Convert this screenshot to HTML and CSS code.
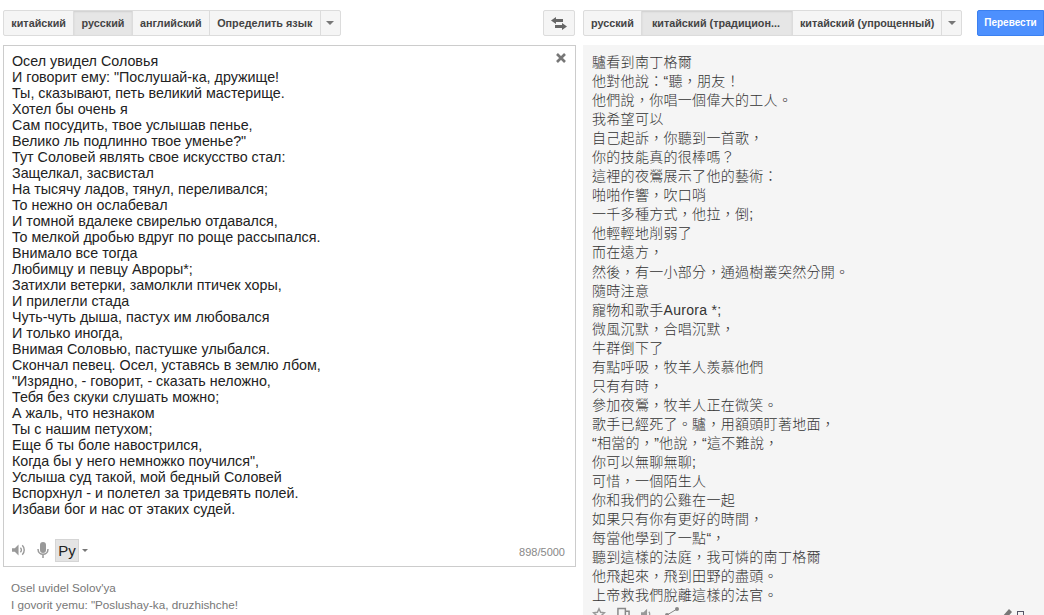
FILE: index.html
```html
<!DOCTYPE html>
<html>
<head>
<meta charset="utf-8">
<title>Переводчик</title>
<link rel="stylesheet" href="styles.css">
</head>
<body>
<div class="page">
  <!-- исходный текст -->
  <div class="col-src">
    <div class="toolbar">
      <div class="btn-group">
        <span class="lang">китайский</span>
        <span class="lang active">русский</span>
        <span class="lang">английский</span>
        <span class="lang">Определить язык</span>
        <span class="lang more"><i class="caret"></i></span>
      </div>
      <span class="swap">
        <svg width="16" height="13" viewBox="0 0 16 13"><path fill="#666" d="M0 3.500 5 0v2h7v3H5v2zM16 9.500 11 6v2H4v3h7v2z"/></svg>
      </span>
    </div>
    <div class="src-box">
      <span class="clear">
        <svg width="10" height="10" viewBox="0 0 10 10"><path stroke="#777" stroke-width="2.6" d="M1 1l8 8M9 1l-8 8"/></svg>
      </span>
      <div class="src-text">Осел увидел Соловья
И говорит ему: "Послушай-ка, дружище!
Ты, сказывают, петь великий мастерище.
Хотел бы очень я
Сам посудить, твое услышав пенье,
Велико ль подлинно твое уменье?"
Тут Соловей являть свое искусство стал:
Защелкал, засвистал
На тысячу ладов, тянул, переливался;
То нежно он ослабевал
И томной вдалеке свирелью отдавался,
То мелкой дробью вдруг по роще рассыпался.
Внимало все тогда
Любимцу и певцу Авроры*;
Затихли ветерки, замолкли птичек хоры,
И прилегли стада
Чуть-чуть дыша, пастух им любовался
И только иногда,
Внимая Соловью, пастушке улыбался.
Скончал певец. Осел, уставясь в землю лбом,
"Изрядно, - говорит, - сказать неложно,
Тебя без скуки слушать можно;
А жаль, что незнаком
Ты с нашим петухом;
Еще б ты боле навострился,
Когда бы у него немножко поучился",
Услыша суд такой, мой бедный Соловей
Вспорхнул - и полетел за тридевять полей.
Избави бог и нас от этаких судей.</div>
      <div class="src-foot">
        <svg class="ico-sound" width="14" height="14" viewBox="0 0 15 14"><path fill="#999" d="M0 5h3l4-4v12l-4-4H0z"/><path fill="none" stroke="#999" stroke-width="1.5" d="M9 4.500a3.500 3.500 0 0 1 0 5M11 2a7 7 0 0 1 0 10"/></svg>
        <svg class="ico-mic" width="12" height="17" viewBox="0 0 12 17"><rect x="3" y="0" width="6" height="11" rx="3" fill="#999"/><path fill="none" stroke="#999" stroke-width="1.5" d="M1 7c0 7 10 7 10 0M6 12v4"/></svg>
        <span class="kbd">Ру</span>
        <i class="caret small"></i>
        <span class="count">898/5000</span>
      </div>
    </div>
    <div class="translit">Osel uvidel Solov'ya<br>I govorit yemu: "Poslushay-ka, druzhishche!</div>
  </div>

  <!-- перевод -->
  <div class="col-dst">
    <div class="toolbar">
      <div class="btn-group">
        <span class="lang">русский</span>
        <span class="lang active trunc">китайский (традицион...</span>
        <span class="lang">китайский (упрощенный)</span>
        <span class="lang more"><i class="caret"></i></span>
      </div>
      <span class="go">Перевести</span>
    </div>
    <div class="dst-box">
      <div class="dst-text">驢看到南丁格爾
他對他說：“聽，朋友！
他們說，你唱一個偉大的工人。
我希望可以
自己起訴，你聽到一首歌，
你的技能真的很棒嗎？
這裡的夜鶯展示了他的藝術：
啪啪作響，吹口哨
一千多種方式，他拉，倒;
他輕輕地削弱了
而在遠方，
然後，有一小部分，通過樹叢突然分開。
隨時注意
寵物和歌手Aurora *;
微風沉默，合唱沉默，
牛群倒下了
有點呼吸，牧羊人羨慕他們
只有有時，
參加夜鶯，牧羊人正在微笑。
歌手已經死了。驢，用額頭盯著地面，
“相當的，”他說，“這不難說，
你可以無聊無聊;
可惜，一個陌生人
你和我們的公雞在一起
如果只有你有更好的時間，
每當他學到了一點“，
聽到這樣的法庭，我可憐的南丁格爾
他飛起來，飛到田野的盡頭。
上帝救我們脫離這樣的法官。</div>
      <div class="dst-foot">
        <svg width="14" height="14" viewBox="0 0 24 24"><path fill="none" stroke="#999" stroke-width="2.500" d="M12 3l2.800 6 6.500.8-4.800 4.400 1.300 6.500L12 17.400 6.200 20.700l1.300-6.500L2.700 9.800 9.200 9z"/></svg>
        <svg width="13" height="14" viewBox="0 0 14 14"><path fill="none" stroke="#888" stroke-width="1.600" d="M1 1h8v9H1zM5 10v3h8V4H9"/></svg>
        <svg width="13" height="14" viewBox="0 0 15 14"><path fill="#999" d="M0 5h3l4-4v12l-4-4H0z"/><path fill="none" stroke="#999" stroke-width="1.500" d="M9 4.500a3.500 3.500 0 0 1 0 5"/></svg>
        <svg width="14" height="14" viewBox="0 0 14 14"><circle cx="2" cy="8" r="2" fill="#888"/><circle cx="12" cy="2" r="2" fill="#888"/><circle cx="12" cy="13" r="2" fill="#888"/><path stroke="#888" d="M2 8l10-6M2 8l10 5"/></svg>
        <svg class="pen" width="12" height="14" viewBox="0 0 12 14"><path fill="#777" d="M0 13l1-4 7-8 3 3-7 8z"/></svg>
        <i class="flag"></i>
      </div>
    </div>
  </div>
</div>
</body>
</html>
```

FILE: styles.css
```css
html, body { margin: 0; height: 100%; overflow: hidden; background: #fff; }
body { font-family: "Liberation Sans", Arial, sans-serif; color: #222; }

.page { display: flex; gap: 7px; height: 615px; padding-left: 3px; }
.col-src { width: 573px; flex: none; }
.col-dst { flex: 1; min-width: 0; }

/* верхние кнопки */
.toolbar { display: flex; justify-content: space-between; height: 26px; padding-top: 10px; margin-bottom: 9px; }
.btn-group { display: flex; border: 1px solid #dcdcdc; border-radius: 2px; box-sizing: border-box; height: 26px; background: #f5f5f5; }
.lang {
  display: block; padding: 0 7px; line-height: 24px; font-size: 10.8px; font-weight: bold; color: #444;
  border-left: 1px solid #dcdcdc; white-space: nowrap;
}
.col-src .lang { padding: 0 7.3px; }
.lang:first-child { border-left: none; }
.lang.active { background: #e6e6e6; box-shadow: inset 0 1px 2px rgba(0,0,0,.1); }
.lang.trunc { box-sizing: content-box; width: 130px; padding: 0 10px; }
.lang.more, .col-src .lang.more { width: 4px; padding: 0 7.500px; }
.caret { display: block; width: 0; height: 0; border: 4px solid transparent; border-top-color: #777; border-bottom: none; margin: 10px 0 0 -2px; }
.caret.small { border-width: 3px; border-bottom: none; margin: 1px 0 0 3px; }
.swap {
  display: flex; align-items: center; justify-content: center; box-sizing: border-box; width: 32px; height: 26px; margin-right: 1px;
  background: #f5f5f5; border: 1px solid #dcdcdc; border-radius: 2px;
}
.go {
  box-sizing: border-box; width: 67px; height: 26px; line-height: 24px; text-align: center; color: #fff; font-size: 10px; font-weight: bold;
  background: #4d90fe; border: 1px solid #3b80f0; border-radius: 2px 0 0 2px;
}

/* левое поле */
.src-box { position: relative; box-sizing: border-box; height: 522px; border: 1px solid #ccc; display: flex; flex-direction: column; }
.src-text { flex: 1; padding: 7px 8px 0; font-size: 14.3px; line-height: 16px; white-space: pre; color: #222; }
.clear { position: absolute; top: 7px; right: 9px; line-height: 0; }
.src-foot { display: flex; align-items: center; height: 31px; padding: 0 10px 1px 8px; box-sizing: border-box; }
.ico-mic { margin-left: 11px; }
.kbd { width: 24px; height: 23px; margin-left: 6px; line-height: 21px; text-align: center; font-size: 15px; background: #e4e4e4; border: 1px solid #d5d5d5; box-sizing: border-box; color: #222; }
.count { margin-left: auto; padding-top: 3px; font-size: 11px; color: #888; }
.translit { padding: 12px 0 0 8px; font-size: 11.7px; line-height: 17px; color: #777; }

/* правое поле */
.dst-box { background: #f5f5f5; height: 570px; }
.dst-text { padding: 8px 0 0 9px; font-family: "Liberation Sans", "Noto Sans CJK TC", sans-serif; font-size: 14px; letter-spacing: .3px; line-height: 19.04px; white-space: pre; font-weight: 300; color: #333; }
.dst-foot { display: flex; align-items: flex-start; gap: 11px; padding: 2px 0 0 9px; }
.pen { margin-left: auto; margin-top: 1px; }
.flag { width: 5px; height: 5px; margin: 4px 20px 0 -7px; border: 1px solid #556; }
```
